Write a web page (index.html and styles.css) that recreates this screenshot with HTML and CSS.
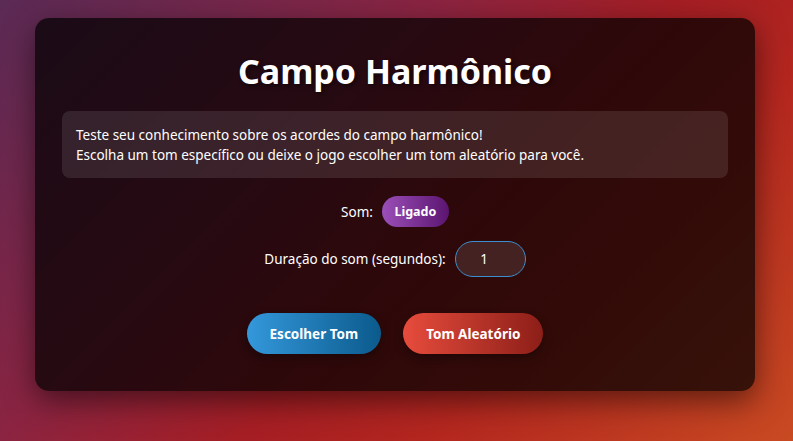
FILE: index.html
```html
<!DOCTYPE html>
<html lang="pt-BR">
<head>
<meta charset="utf-8">
<title>Campo Harmônico</title>
<link rel="stylesheet" href="styles.css">
</head>
<body>
<main class="card">
  <h1 class="title">Campo Harmônico</h1>
  <div class="info">
    <p>Teste seu conhecimento sobre os acordes do campo harmônico!</p>
    <p>Escolha um tom específico ou deixe o jogo escolher um tom aleatório para você.</p>
  </div>
  <div class="row sound-row">
    <span class="label">Som:</span>
    <button class="toggle">Ligado</button>
  </div>
  <div class="row duration-row">
    <label class="label" for="dur">Duração do som (segundos):</label>
    <input id="dur" class="dur-input" type="text" value="1">
  </div>
  <div class="actions">
    <button class="btn btn-blue">Escolher Tom</button>
    <button class="btn btn-red">Tom Aleatório</button>
  </div>
</main>
</body>
</html>
```
FILE: styles.css
```css
* { box-sizing: border-box; }
html, body { margin: 0; height: 100%; }
body {
  font-family: "Noto Sans", "Open Sans", sans-serif;
  color: #fff;
  background: linear-gradient(135deg, #5a2a55 0%, #8a2442 35%, #a51e24 55%, #b3261f 70%, #c84a22 100%);
  padding-top: 18px;
  overflow: hidden;
}
.card {
  width: 720px;
  margin: 0 0 0 35px;
  background: rgba(0, 0, 0, 0.72);
  border-radius: 14px;
  box-shadow: 0 10px 30px rgba(0, 0, 0, 0.5);
  padding: 26px 27px 37px;
  display: flex;
  flex-direction: column;
  align-items: center;
}
.title {
  margin: 0 0 13px;
  font-size: 34px;
  font-weight: 700;
  line-height: 54px;
  text-shadow: 2px 2px 4px rgba(0, 0, 0, 0.5);
}
.info {
  align-self: stretch;
  background: rgba(255, 255, 255, 0.1);
  border-radius: 8px;
  padding: 14px 14px 13px;
  font-size: 13.5px;
  line-height: 20px;
}
.info p { margin: 0; }
.row {
  display: flex;
  align-items: center;
  gap: 9px;
  font-size: 13.5px;
}
.sound-row { margin-top: 18px; }
.duration-row { margin-top: 14px; }
.toggle {
  font-family: inherit;
  font-size: 12.5px;
  font-weight: 700;
  color: #fff;
  border: none;
  border-radius: 16px;
  width: 67px;
  height: 31px;
  background: linear-gradient(90deg, #9b4fb8, #5b1570);
}
.dur-input {
  width: 71px;
  height: 36px;
  border-radius: 18px;
  border: 1px solid #3a8fd0;
  background: rgba(255, 255, 255, 0.1);
  color: #fff;
  text-align: center;
  font-family: inherit;
  font-size: 13.5px;
  padding: 0 14px 0 2px;
  outline: none;
}
.actions {
  display: flex;
  gap: 22px;
  margin-top: 36px;
}
.btn {
  font-family: inherit;
  font-size: 13.5px;
  font-weight: 700;
  color: #fff;
  border: none;
  border-radius: 21px;
  height: 41px;
  padding: 0 23px;
  box-shadow: 0 4px 10px rgba(0, 0, 0, 0.35);
}
.btn-blue { background: linear-gradient(90deg, #3498db, #0b5a8c); }
.btn-red { background: linear-gradient(90deg, #e74c3c, #8c1e18); }
```
